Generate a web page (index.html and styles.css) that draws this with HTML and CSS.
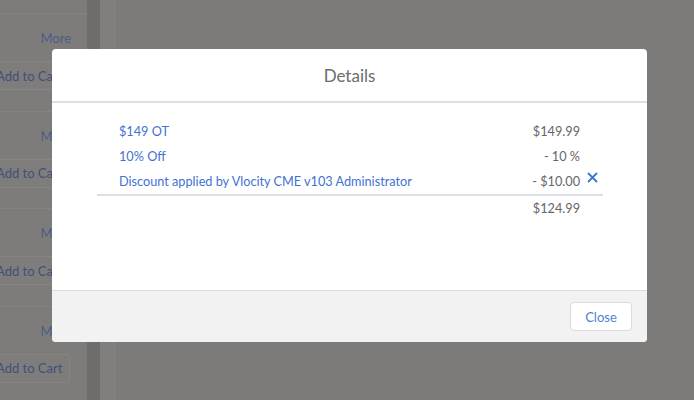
FILE: index.html
```html
<!DOCTYPE html>
<html>
<head>
  <title>Details</title>
  <link rel="stylesheet" href="styles.css">
</head>
<body>
  <div class="page">
    <div class="side-list">
      <div class="item">
        <a class="more-link">More</a>
        <button class="cart-button">Add to Cart</button>
      </div>
      <div class="item">
        <a class="more-link">More</a>
        <button class="cart-button">Add to Cart</button>
      </div>
      <div class="item">
        <a class="more-link">More</a>
        <button class="cart-button">Add to Cart</button>
      </div>
      <div class="item">
        <a class="more-link">More</a>
        <button class="cart-button">Add to Cart</button>
      </div>
    </div>
    <div class="splitter"></div>
    <div class="main-area"></div>
  </div>

  <div class="modal">
    <div class="modal-header">
      <h2>Details</h2>
    </div>
    <div class="modal-body">
      <div class="price-table">
        <div class="price-row">
          <a class="label">$149 OT</a>
          <span class="amount">$149.99</span>
        </div>
        <div class="price-row">
          <a class="label">10% Off</a>
          <span class="amount">- 10 %</span>
        </div>
        <div class="price-row discount-row">
          <a class="label">Discount applied by Vlocity CME v103 Administrator</a>
          <span class="amount">- $10.00</span>
          <button class="remove-button" title="Remove">
            <svg width="11" height="11" viewBox="0 0 11 11">
              <path d="M1.5 1.5 L9.5 9.5 M9.5 1.5 L1.5 9.5" stroke="#3b73d6" stroke-width="1.8" stroke-linecap="round"/>
            </svg>
          </button>
        </div>
        <div class="price-row total-row">
          <span class="label"></span>
          <span class="amount">$124.99</span>
        </div>
      </div>
    </div>
    <div class="modal-footer">
      <button class="close-button">Close</button>
    </div>
  </div>
</body>
</html>
```

FILE: styles.css
```css
html, body {
  margin: 0;
  height: 100%;
  overflow: hidden;
}

body {
  font-family: "Lato", "Open Sans", sans-serif;
  background: #7d7b7a;
}

.page {
  display: flex;
  height: 100%;
}

.side-list {
  width: 87px;
  background: #7e7c7b;
  padding-top: 13px;
  overflow: hidden;
}

.item {
  height: 97.5px;
  border-top: 1px solid #858382;
  box-sizing: border-box;
}

.more-link {
  display: block;
  text-align: right;
  padding-right: 16px;
  margin-top: 15px;
  height: 18px;
  line-height: 18px;
  font-size: 13px;
  color: #4b5d86;
}

.cart-button {
  display: block;
  margin-top: 14px;
  margin-left: -16px;
  width: 86px;
  height: 29px;
  background: #7f7d7c;
  border: 1px solid #878584;
  border-radius: 4px;
  font-family: inherit;
  font-size: 13px;
  color: #3f5079;
  text-align: left;
  padding: 0 0 0 11px;
  white-space: nowrap;
}

.splitter {
  width: 13px;
  background: #6f6d6c;
}

.main-area {
  flex: 1;
  background: linear-gradient(to right, #817f7e 0, #817f7e 16px, #7d7b7a 16px);
}

.modal {
  position: absolute;
  left: 52px;
  top: 49px;
  width: 595px;
  height: 293px;
  background: #fff;
  border-radius: 4px;
  overflow: hidden;
  display: flex;
  flex-direction: column;
}

.modal-header {
  height: 52px;
  border-bottom: 2px solid #dcdfe4;
  display: flex;
  align-items: center;
  justify-content: center;
}

.modal-header h2 {
  margin: 0;
  font-size: 17px;
  font-weight: normal;
  color: #6b6c70;
}

.modal-body {
  flex: 1;
  padding: 15px 44px 0 45px;
}

.price-row {
  display: flex;
  align-items: center;
  height: 25px;
  font-size: 12.7px;
}

.price-row .label {
  flex: 1;
  padding-left: 22px;
  color: #3f72d4;
}

.price-row .amount {
  width: 90px;
  text-align: right;
  padding-right: 23px;
  color: #656669;
}

.discount-row {
  position: relative;
  height: 26px;
  border-bottom: 2px solid #dde0e8;
}

.remove-button {
  position: absolute;
  right: 5px;
  top: 4px;
  padding: 0;
  border: 0;
  background: none;
  line-height: 0;
}

.total-row {
  height: 24px;
}

.modal-footer {
  height: 51px;
  border-top: 1px solid #dddbda;
  background: #f3f2f2;
  display: flex;
  align-items: center;
  justify-content: flex-end;
  padding-right: 15px;
}

.close-button {
  height: 29px;
  width: 62px;
  background: #fff;
  border: 1px solid #dddbda;
  border-radius: 4px;
  font-family: inherit;
  font-size: 13px;
  color: #4f7fd6;
}
```
